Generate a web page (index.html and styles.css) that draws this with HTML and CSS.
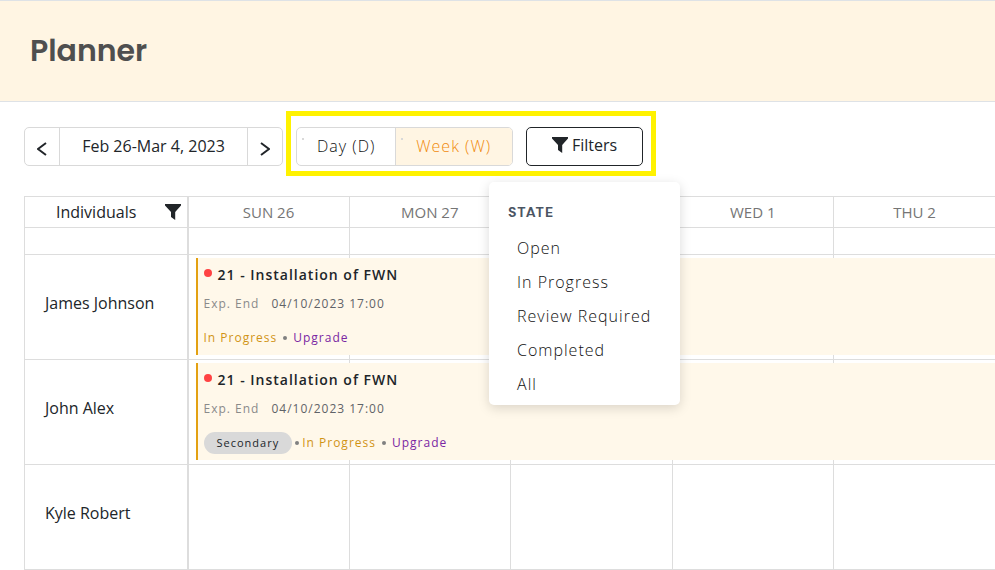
FILE: index.html
```html
<!DOCTYPE html>
<html lang="en">

<head>
    <meta charset="UTF-8">
    <meta name="viewport" content="width=device-width, initial-scale=1.0">
    <title>Planner</title>
    <link rel="stylesheet" href="styles.css">
</head>

<body>

    <header class="page-header">
        <h1>Planner</h1>
    </header>

    <main class="planner">
        <div class="toolbar">
            <div class="date-nav">
                <button type="button" class="nav-btn" aria-label="Previous week">
                    <svg width="10" height="14" viewBox="0 0 10 14"><path d="M9 1 1 7l8 6" /></svg>
                </button>
                <button type="button" class="nav-range">Feb 26-Mar 4, 2023</button>
                <button type="button" class="nav-btn" aria-label="Next week">
                    <svg width="10" height="14" viewBox="0 0 10 14"><path d="m1 1 8 6-8 6" /></svg>
                </button>
            </div>

            <div class="highlight">
                <div class="view-switch">
                    <label class="view"><input type="radio" name="view" value="day">Day (D)</label>
                    <label class="view active"><input type="radio" name="view" value="week" checked>Week (W)</label>
                </div>
                <div class="filters">
                    <button type="button" class="filters-btn">
                        <svg class="funnel" viewBox="0 0 16 16"><path d="M0 0h16v1.4L10.2 8v8L6 13V8L0 1.4z" /></svg>
                        Filters
                    </button>
                    <div class="filters-menu">
                        <h2>STATE</h2>
                        <a href="#open">Open</a>
                        <a href="#in-progress">In Progress</a>
                        <a href="#review">Review Required</a>
                        <a href="#completed">Completed</a>
                        <a href="#all">All</a>
                    </div>
                </div>
            </div>
        </div>

        <table class="schedule">
            <thead>
                <tr>
                    <th class="person">
                        <div class="person-head">
                            <span>Individuals</span>
                            <button type="button" class="icon-btn" aria-label="Filter individuals">
                                <svg class="funnel" viewBox="0 0 16 16"><path d="M0 0h16v1.4L10.2 8v8L6 13V8L0 1.4z" /></svg>
                            </button>
                        </div>
                    </th>
                    <th>SUN 26</th>
                    <th>MON 27</th>
                    <th>TUE 28</th>
                    <th>WED 1</th>
                    <th>THU 2</th>
                </tr>
            </thead>
            <tbody>
                <tr class="all-day">
                    <td class="person"></td>
                    <td></td>
                    <td></td>
                    <td></td>
                    <td></td>
                    <td></td>
                </tr>
                <tr>
                    <td class="person">James Johnson</td>
                    <td>
                        <div class="event">
                            <div class="event-title"><span class="dot"></span>21 - Installation of FWN</div>
                            <div class="event-end"><span>Exp. End</span><span class="date">04/10/2023 17:00</span></div>
                            <div class="event-tags">
                                <span class="status">In Progress</span><span class="sep"></span><span class="type">Upgrade</span>
                            </div>
                        </div>
                    </td>
                    <td></td>
                    <td></td>
                    <td></td>
                    <td></td>
                </tr>
                <tr>
                    <td class="person">John Alex</td>
                    <td>
                        <div class="event">
                            <div class="event-title"><span class="dot"></span>21 - Installation of FWN</div>
                            <div class="event-end"><span>Exp. End</span><span class="date">04/10/2023 17:00</span></div>
                            <div class="event-tags">
                                <span class="badge">Secondary</span><span class="sep tight"></span><span class="status">In Progress</span><span class="sep"></span><span class="type">Upgrade</span>
                            </div>
                        </div>
                    </td>
                    <td></td>
                    <td></td>
                    <td></td>
                    <td></td>
                </tr>
                <tr>
                    <td class="person">Kyle Robert</td>
                    <td></td>
                    <td></td>
                    <td></td>
                    <td></td>
                    <td></td>
                </tr>
            </tbody>
        </table>
    </main>

</body>

</html>
```

FILE: styles.css
```css
* {
    box-sizing: border-box;
}

body {
    margin: 0;
    font-family: "Open Sans", sans-serif;
    font-size: 16px;
    line-height: 24px;
    color: #212529;
    background-color: #fff;
}

button {
    font: inherit;
    color: inherit;
    background: none;
    border: none;
    padding: 0;
    cursor: pointer;
}

/* header */
.page-header {
    padding: 30px;
    background-color: #fff5e3;
    border-top: 1px solid #dee2e6;
    border-bottom: 1px solid #dee2e6;
}

h1 {
    margin: 0;
    font-family: Poppins, Inter, sans-serif;
    font-size: 30px;
    line-height: 40px;
    font-weight: 600;
    color: #4f4f4f;
}

.planner {
    padding: 9px 0 0 24px;
    overflow: hidden;
}

/* toolbar */
.toolbar {
    display: flex;
    align-items: center;
    gap: 3px;
    margin-bottom: 20px;
}

.date-nav {
    display: flex;
    height: 39px;
    margin-top: 6px;
    border: 1px solid #d9d9d9;
    border-radius: 5px;
}

.date-nav svg {
    fill: none;
    stroke: #212529;
    stroke-width: 2;
    vertical-align: middle;
}

.nav-btn {
    width: 34px;
    padding-top: 1px;
}

.nav-range {
    width: 189px;
    padding-bottom: 2px;
    border: solid #d9d9d9;
    border-width: 0 1px;
}

.highlight {
    display: flex;
    gap: 13px;
    padding: 11px 8px 5px 5px;
    border: 5px solid #fff200;
}

.view-switch {
    display: flex;
    height: 39px;
    border: 1px solid #d9d9d9;
    border-radius: 5px;
    overflow: hidden;
}

.view {
    display: flex;
    padding: 6px 20px 0 5px;
    font-weight: 300;
    letter-spacing: 1px;
    color: #111;
    cursor: pointer;
}

.view input {
    appearance: none;
    width: 2px;
    height: 2px;
    margin: 4px 13px 0 0;
    background-color: #d9d9d9;
}

.view.active {
    padding-right: 21px;
    color: #f08a0c;
    background-color: #fff5e3;
    border-left: 1px solid #d9d9d9;
}

.filters {
    position: relative;
}

.funnel {
    width: 16px;
    height: 16px;
    fill: #212529;
}

.filters-btn {
    display: flex;
    align-items: center;
    justify-content: center;
    gap: 4px;
    width: 117px;
    height: 39px;
    padding-bottom: 3px;
    border: 1px solid #212529;
    border-radius: 5px;
}

.filters-menu {
    position: absolute;
    z-index: 2;
    top: 55px;
    left: -37px;
    right: -37px;
    padding: 18px 19px 4px;
    background-color: #fff;
    border-radius: 5px;
    box-shadow: 0 3px 12px rgba(0, 0, 0, 0.15);
}

.filters-menu h2 {
    margin: 0 0 7px;
    font-family: "DM Sans", Inter, sans-serif;
    font-size: 14px;
    line-height: 24px;
    letter-spacing: 1px;
    color: #4b5563;
}

.filters-menu a {
    display: block;
    padding: 5px 9px;
    font-weight: 300;
    letter-spacing: 1px;
    color: #111;
    text-decoration: none;
    white-space: nowrap;
}

/* schedule */
.schedule {
    width: 100%;
    table-layout: fixed;
    border-collapse: collapse;
}

.schedule th,
.schedule td {
    height: 105px;
    padding: 0;
    border: 1px solid #ddd;
    font-weight: 400;
}

.schedule th {
    height: 31px;
    font-size: 15px;
    color: #757575;
}

.schedule .all-day td {
    height: 27px;
}

.schedule .person {
    width: 163px;
    padding-left: 20px;
    border-right-width: 2px;
    font-size: 16px;
    color: #212529;
}

.schedule td.person {
    padding-bottom: 8px;
}

.schedule th:last-child,
.schedule td:last-child {
    border-right: none;
}

.person-head {
    display: flex;
    justify-content: space-between;
    padding: 0 6px 0 11px;
}

.icon-btn {
    display: flex;
    align-items: center;
}

/* the event starts on Sunday and runs over the rest of the week */
.event {
    position: relative;
    z-index: 1;
    width: 500%;
    height: 97px;
    margin: 0 0 1px 7px;
    padding: 5px 6px;
    border-left: 2px solid #e3a112;
    background-color: #fff8ea;
    font-size: 12px;
    letter-spacing: 1px;
    white-space: nowrap;
}

.event-title {
    display: flex;
    align-items: center;
    gap: 6px;
    font-size: 14px;
    font-weight: 600;
}

.dot {
    width: 8px;
    height: 8px;
    margin-bottom: 4px;
    border-radius: 50%;
    background-color: #ff4343;
}

.event-end {
    display: flex;
    gap: 12px;
    margin-top: 5px;
    color: #8a8a8a;
}

.date {
    color: #5f6368;
}

.event-tags {
    display: flex;
    align-items: center;
    margin-top: 10px;
}

.badge {
    padding: 0 13px;
    border-radius: 11px;
    background-color: #d9d9d9;
    color: #212529;
    font-size: 11px;
    line-height: 22px;
}

.sep {
    width: 4px;
    height: 4px;
    margin: 0 6px;
    border-radius: 50%;
    background-color: #808080;
}

.sep.tight {
    margin: 0 3px;
}

.status {
    color: #d19415;
}

.type {
    color: #7a26a3;
}
```
